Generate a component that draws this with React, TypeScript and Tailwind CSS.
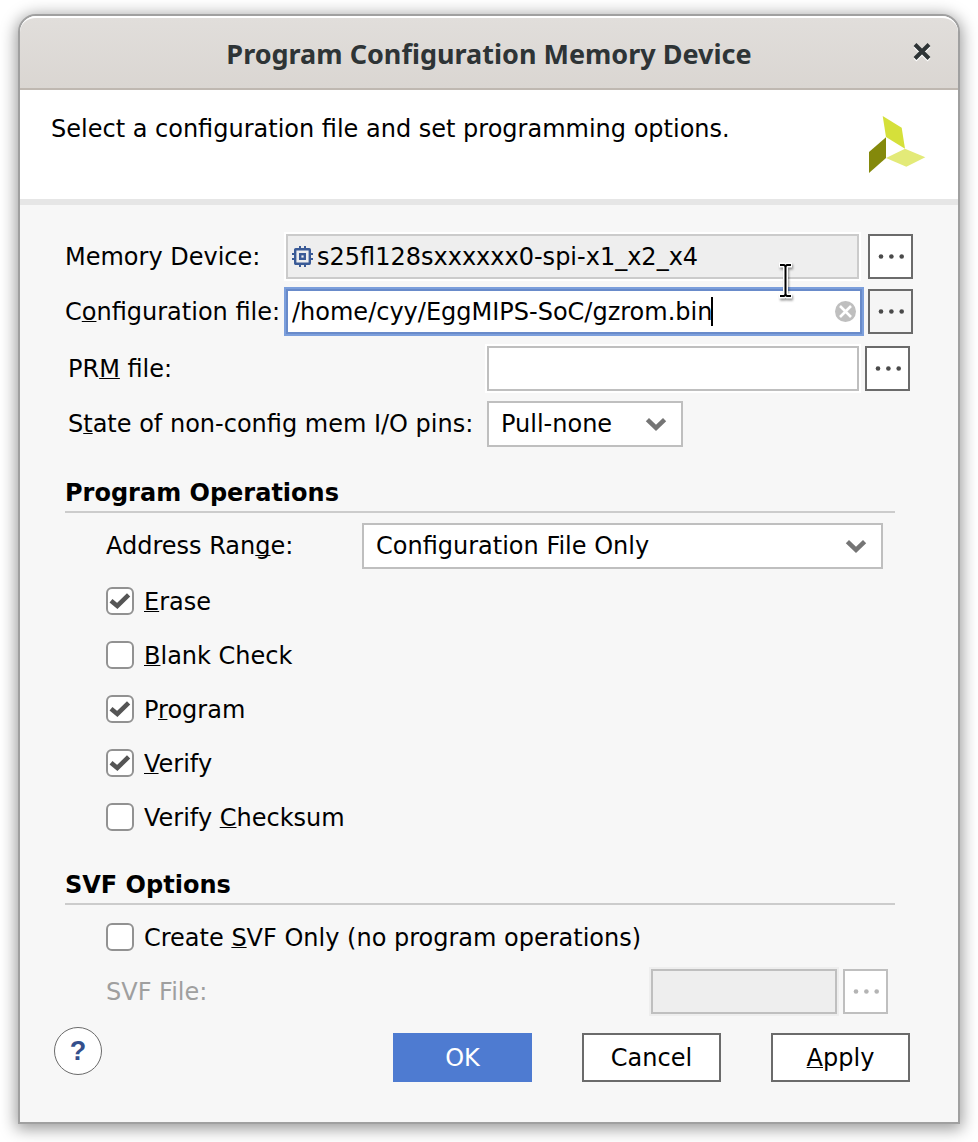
import { useState } from "react";
import type { ReactNode, InputHTMLAttributes, SelectHTMLAttributes } from "react";

function Key({ children }: { children: ReactNode }) {
  return (
    <span className="underline decoration-1 underline-offset-1 [text-decoration-skip-ink:none]">{children}</span>
  );
}

function BrowseButton({ label, tone = "bg-white", disabled = false }: { label: string; tone?: string; disabled?: boolean }) {
  return (
    <button
      type="button"
      aria-label={label}
      disabled={disabled}
      className={`flex size-[45px] shrink-0 items-center justify-center border-2 ${
        disabled ? "border-[#bfbfbf] text-[#b4b4b4]" : "border-[#6b6b6b] text-[#4a4a4a]"
      } ${tone}`}
    >
      <svg width="27" height="5" viewBox="0 0 27 5" fill="currentColor" aria-hidden="true">
        <circle cx="4" cy="2.5" r="2.3" />
        <circle cx="14.4" cy="2.5" r="2.3" />
        <circle cx="24.7" cy="2.5" r="2.3" />
      </svg>
    </button>
  );
}

function TextField({ className = "", ...props }: InputHTMLAttributes<HTMLInputElement>) {
  return <input type="text" className={`h-[45px] min-w-0 border-2 outline-none ${className}`} {...props} />;
}

function DropDown({ className, ...props }: SelectHTMLAttributes<HTMLSelectElement>) {
  return (
    <div className={`relative ${className}`}>
      <select className="h-[46px] w-full appearance-none border-2 border-[#bfbfbf] bg-white pr-12 pl-3 outline-none" {...props} />
      <svg
        className="pointer-events-none absolute top-4 right-4"
        width="22"
        height="14"
        viewBox="0 0 22 14"
        fill="none"
        stroke="#757575"
        strokeWidth="4.6"
        aria-hidden="true"
      >
        <path d="M2.4 2.6 L11 10.8 L19.6 2.6" />
      </svg>
    </div>
  );
}

function CheckRow({ children, checked = false }: { children: ReactNode; checked?: boolean }) {
  const [on, setOn] = useState(checked);
  return (
    <label className="flex h-7 items-center gap-[10px]">
      <span className="grid size-7 shrink-0">
        <input
          type="checkbox"
          checked={on}
          onChange={() => setOn(!on)}
          className="col-start-1 row-start-1 size-7 appearance-none rounded-md border-2 border-[#929292] bg-white"
        />
        {on && (
          <svg
            className="pointer-events-none col-start-1 row-start-1"
            width="28"
            height="28"
            viewBox="0 0 28 28"
            fill="none"
            stroke="#555555"
            strokeWidth="4.6"
            aria-hidden="true"
          >
            <path d="M5 13.8 L11.3 19 L22.6 7.8" />
          </svg>
        )}
      </span>
      <span className="pt-[2px]">{children}</span>
    </label>
  );
}

function SectionTitle({ children }: { children: ReactNode }) {
  return <h2 className="border-b-2 border-[#cccccc] pb-1 font-bold">{children}</h2>;
}

function ChipIcon() {
  return (
    <svg
      className="pointer-events-none absolute top-3 left-[6px]"
      width="21"
      height="21"
      viewBox="0 0 21 21"
      fill="none"
      stroke="#3a5a96"
      strokeWidth="2"
      aria-hidden="true"
    >
      <rect x="3.2" y="3.2" width="14.6" height="14.6" rx="0.5" strokeWidth="2.4" />
      <rect x="8.2" y="8.2" width="4.6" height="4.6" strokeWidth="2.4" />
      <path d="M8 0 V3 M13 0 V3 M8 18 V21 M13 18 V21 M0 8 H3 M0 13 H3 M18 8 H21 M18 13 H21" />
    </svg>
  );
}

function PointerIBeam() {
  return (
    <svg className="pointer-events-none absolute top-7 right-[66px] z-10 drop-shadow-[1px_2px_1px_rgba(0,0,0,0.4)]" width="15" height="37" viewBox="0 0 15 37" fill="none" aria-hidden="true">
      <path d="M1 3 H6 L7.5 4 L9 3 H14 M7.5 3 V34 M1 34 H6 L7.5 33 L9 34 H14" stroke="#ffffff" strokeWidth="5" />
      <path d="M2 3 H6 L7.5 4 L9 3 H13 M2 34 H6 L7.5 33 L9 34 H13" stroke="#000000" strokeWidth="2" />
      <path d="M7.5 3 V34" stroke="#000000" strokeWidth="2" />
    </svg>
  );
}

export default function App() {
  const [file, setFile] = useState("/home/cyy/EggMIPS-SoC/gzrom.bin");
  return (
    <div className="min-h-screen bg-white px-[18px] pt-[14px] pb-[18px] font-['DejaVu_Sans',sans-serif] text-[24px] leading-7 text-black">
      <main className="rounded-t-[18px] border-2 border-[#a0a0a0] bg-[#f7f7f7] shadow-[0_3px_16px_2px_rgba(0,0,0,0.4)]">
        <header className="flex h-[74px] items-center rounded-t-2xl border-t-2 border-b-2 border-t-white border-b-[#bfb8b1] bg-linear-to-b from-[#e1dedb] to-[#dad6d2] pt-[2px] pr-[26px] pl-[46px]">
          <h1 className="flex-1 text-center font-['Noto_Sans',sans-serif] text-[27px] font-bold text-[#2e3436]">
            Program Configuration Memory Device
          </h1>
          <button type="button" aria-label="Close" className="flex size-5 items-center justify-center pb-1">
            <svg width="18" height="19" viewBox="0 0 18 19" fill="none" strokeWidth="4" aria-hidden="true">
              <path d="M2 3 L16 17 M16 3 L2 17" stroke="#ffffff" />
              <path d="M2 1.5 L16 15.5 M16 1.5 L2 15.5" stroke="#2e3436" />
            </svg>
          </button>
        </header>

        <div className="flex h-[115px] items-start justify-between border-b-6 border-[#e6e6e6] bg-white pt-[25px] pr-8 pl-[31px]">
          <p>Select a configuration file and set programming options.</p>
          <svg className="mt-px shrink-0" width="57" height="57" viewBox="0 0 57 57" role="img" aria-label="Logo">
            <path d="M13.7 0 L32.7 11.7 L36 32.7 L17 21Z" fill="#d5e03a" />
            <path d="M0 36 L17 21.3 V42 L0 57Z" fill="#84890b" />
            <path d="M17 42 L36 32.7 L56.3 41.3 L37.3 50.7Z" fill="#e3ea78" />
          </svg>
        </div>

        <form className="px-[45px] pt-[29px] pb-10" onSubmit={(e) => e.preventDefault()}>
          <div className="flex flex-col gap-[10px]">
            <div className="flex items-center">
              <label htmlFor="device" className="w-[221px] shrink-0">Memory Device:</label>
              <div className="relative mr-[9px] flex-1">
                <TextField
                  id="device"
                  readOnly
                  defaultValue="s25fl128sxxxxxx0-spi-x1_x2_x4"
                  className="w-full border-[#cbcbcb] bg-[#eeeeee] pr-2 pl-[29px] ring-2 ring-white"
                />
                <ChipIcon />
                <PointerIBeam />
              </div>
              <BrowseButton label="Browse memory device" />
            </div>
            <div className="flex items-center">
              <label htmlFor="config" className="w-[221px] shrink-0">C<Key>o</Key>nfiguration file:</label>
              <div className="relative mr-[6px] flex-1">
                <TextField
                  id="config"
                  value={file}
                  onChange={(e) => setFile(e.target.value)}
                  className="w-full border-[#698bca] bg-white pr-9 pl-1 ring-2 ring-[#7c9fdc]"
                />
                <span className="pointer-events-none absolute top-2 left-[425px] h-[29px] w-[2px] bg-black" />
                <button type="button" aria-label="Clear" onClick={() => setFile("")} className="absolute top-3 right-[6px] size-[21px]">
                  <svg width="21" height="21" viewBox="0 0 21 21" aria-hidden="true">
                    <circle cx="10.5" cy="10.5" r="10.5" fill="#bfbfbf" />
                    <path d="M5 5 L16 16 M16 5 L5 16" stroke="#ffffff" strokeWidth="2.6" />
                  </svg>
                </button>
              </div>
              <BrowseButton label="Browse configuration file" tone="bg-[#f5f5f5]" />
            </div>
          </div>

          <div className="mt-3 flex flex-col gap-[10px] px-[3px]">
            <div className="flex items-center">
              <label htmlFor="prm" className="w-[419px] shrink-0">PR<Key>M</Key> file:</label>
              <TextField id="prm" className="mr-[6px] flex-1 border-[#bfbfbf] bg-white px-1 ring-2 ring-white" />
              <BrowseButton label="Browse PRM file" />
            </div>
            <div className="flex items-center">
              <label htmlFor="pins" className="w-[419px] shrink-0">S<Key>t</Key>ate of non-config mem I/O pins:</label>
              <DropDown id="pins" className="w-[196px]" defaultValue="Pull-none">
                <option>Pull-none</option>
                <option>Pull-up</option>
                <option>Pull-down</option>
              </DropDown>
            </div>
          </div>

          <section className="mt-8 pr-[18px]">
            <SectionTitle>Program Operations</SectionTitle>
            <div className="mt-[10px] flex items-center pr-3 pl-[41px]">
              <label htmlFor="range" className="w-[256px] shrink-0">Address Ran<Key>g</Key>e:</label>
              <DropDown id="range" className="flex-1" defaultValue="Configuration File Only">
                <option>Configuration File Only</option>
                <option>Entire Configuration Memory Device</option>
              </DropDown>
            </div>
            <div className="mt-[18px] flex flex-col gap-[26px] pl-[41px]">
              <CheckRow checked><Key>E</Key>rase</CheckRow>
              <CheckRow><Key>B</Key>lank Check</CheckRow>
              <CheckRow checked>P<Key>r</Key>ogram</CheckRow>
              <CheckRow checked><Key>V</Key>erify</CheckRow>
              <CheckRow>Verify <Key>C</Key>hecksum</CheckRow>
            </div>
          </section>

          <section className="mt-10 pr-[18px]">
            <SectionTitle>SVF Options</SectionTitle>
            <div className="mt-[18px] flex flex-col gap-[18px] pr-[7px] pl-[41px]">
              <CheckRow>Create <Key>S</Key>VF Only (no program operations)</CheckRow>
              <div className="flex items-center">
                <label htmlFor="svf" className="flex-1 text-[#9f9f9f]">SVF File:</label>
                <TextField id="svf" disabled className="mr-[6px] w-[186px] border-[#bfbfbf] bg-[#eeeeee] px-1 ring-2 ring-[#eeeeee]" />
                <BrowseButton label="Browse SVF file" disabled />
              </div>
            </div>
          </section>

          <footer className="-ml-[11px] mt-[13px] flex items-start justify-between pr-[3px]">
            <button
              type="button"
              aria-label="Help"
              className="flex size-12 items-center justify-center rounded-full border border-[#6b6b6b] bg-white font-['Liberation_Sans',sans-serif] text-[27px] font-bold text-[#344f8c]"
            >
              ?
            </button>
            <div className="mt-[6px] flex gap-[50px]">
              <button type="submit" className="h-[49px] w-[139px] bg-[#4e7bd1] text-white">OK</button>
              <button type="button" className="h-[49px] w-[139px] border-2 border-[#6b6b6b] bg-white">Cancel</button>
              <button type="button" className="h-[49px] w-[139px] border-2 border-[#6b6b6b] bg-white"><Key>A</Key>pply</button>
            </div>
          </footer>
        </form>
      </main>
    </div>
  );
}
